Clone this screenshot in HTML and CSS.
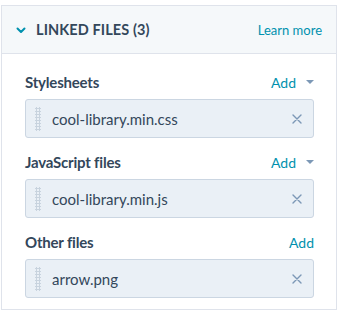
FILE: index.html
```html
<!DOCTYPE html>
<html lang="en">
<head>
    <meta charset="UTF-8">
    <meta name="viewport" content="width=device-width, initial-scale=1.0">
    <title>Linked Files</title>
    <link rel="stylesheet" href="styles.css">
</head>
<body>
    <div class="panel">
        <div class="panel-header">
            <svg class="chevron" width="10" height="7" viewBox="0 0 10 7">
                <path d="M1.5 1.5 L5 5 L8.5 1.5" fill="none" stroke="#0091ae" stroke-width="2" stroke-linecap="round" stroke-linejoin="round"/>
            </svg>
            <span class="panel-title">Linked files (3)</span>
            <a class="learn-more" href="#">Learn more</a>
        </div>

        <div class="panel-body">
            <div class="file-group">
                <div class="group-head">
                    <span class="group-label">Stylesheets</span>
                    <a class="add-link" href="#">Add <span class="caret"></span></a>
                </div>
                <div class="file-item">
                    <span class="drag-handle"></span>
                    <span class="file-name">cool-library.min.css</span>
                    <svg class="remove" width="10" height="10" viewBox="0 0 10 10">
                        <path d="M1 1 L9 9 M9 1 L1 9" stroke="#7c98b6" stroke-width="1.4" stroke-linecap="round"/>
                    </svg>
                </div>
            </div>

            <div class="file-group">
                <div class="group-head">
                    <span class="group-label">JavaScript files</span>
                    <a class="add-link" href="#">Add <span class="caret"></span></a>
                </div>
                <div class="file-item">
                    <span class="drag-handle"></span>
                    <span class="file-name">cool-library.min.js</span>
                    <svg class="remove" width="10" height="10" viewBox="0 0 10 10">
                        <path d="M1 1 L9 9 M9 1 L1 9" stroke="#7c98b6" stroke-width="1.4" stroke-linecap="round"/>
                    </svg>
                </div>
            </div>

            <div class="file-group">
                <div class="group-head">
                    <span class="group-label">Other files</span>
                    <a class="add-link" href="#">Add</a>
                </div>
                <div class="file-item">
                    <span class="drag-handle"></span>
                    <span class="file-name">arrow.png</span>
                    <svg class="remove" width="10" height="10" viewBox="0 0 10 10">
                        <path d="M1 1 L9 9 M9 1 L1 9" stroke="#7c98b6" stroke-width="1.4" stroke-linecap="round"/>
                    </svg>
                </div>
            </div>
        </div>
    </div>
</body>
</html>
```

FILE: styles.css
```css
:root {
    --text-color: #33475b;
    --link-color: #0091ae;
    --muted-color: #7c98b6;
    --border-color: #cbd6e2;
    --header-bg: #f5f8fa;
    --item-bg: #eaf0f6;
}

* {
    margin: 0;
    padding: 0;
    box-sizing: border-box;
    font-family: 'Lato', 'Noto Sans', sans-serif;
}

body {
    background-color: white;
    color: var(--text-color);
    padding: 5px 0 0 1px;
}

.panel {
    border: 1px solid #dfe3eb;
    width: 336px;
    height: 305px;
}

.panel-header {
    display: flex;
    align-items: center;
    height: 48px;
    padding: 0 14px;
    background-color: var(--header-bg);
    border-bottom: 1px solid #dfe3eb;
}

.chevron {
    display: block;
    margin-top: 1px;
}

.panel-title {
    margin-left: 10px;
    font-size: 14.5px;
    font-weight: 700;
    text-transform: uppercase;
    letter-spacing: 0.1px;
}

.learn-more {
    margin-left: auto;
    color: var(--link-color);
    font-size: 13px;
    text-decoration: none;
}

.panel-body {
    padding: 18px 22px 0 23px;
}

.file-group {
    margin-bottom: 14px;
}

.group-head {
    display: flex;
    align-items: center;
    justify-content: space-between;
    height: 20px;
    margin-bottom: 7px;
}

.group-label {
    font-size: 15px;
    font-weight: 700;
    letter-spacing: -0.2px;
}

.add-link {
    display: flex;
    align-items: center;
    color: var(--link-color);
    font-size: 14px;
    text-decoration: none;
}

.caret {
    width: 0;
    height: 0;
    margin-left: 10px;
    border-left: 4px solid transparent;
    border-right: 4px solid transparent;
    border-top: 4px solid var(--muted-color);
}

.file-item {
    display: flex;
    align-items: center;
    height: 39px;
    padding: 0 11px 0 9px;
    background-color: var(--item-bg);
    border: 1px solid var(--border-color);
    border-radius: 3px;
}

.drag-handle {
    width: 6px;
    height: 24px;
    background-image: radial-gradient(circle, #c8d3de 1px, transparent 1.2px);
    background-size: 3px 3px;
}

.file-name {
    margin-left: 11px;
    font-size: 15px;
}

.remove {
    display: block;
    margin-left: auto;
}
```
